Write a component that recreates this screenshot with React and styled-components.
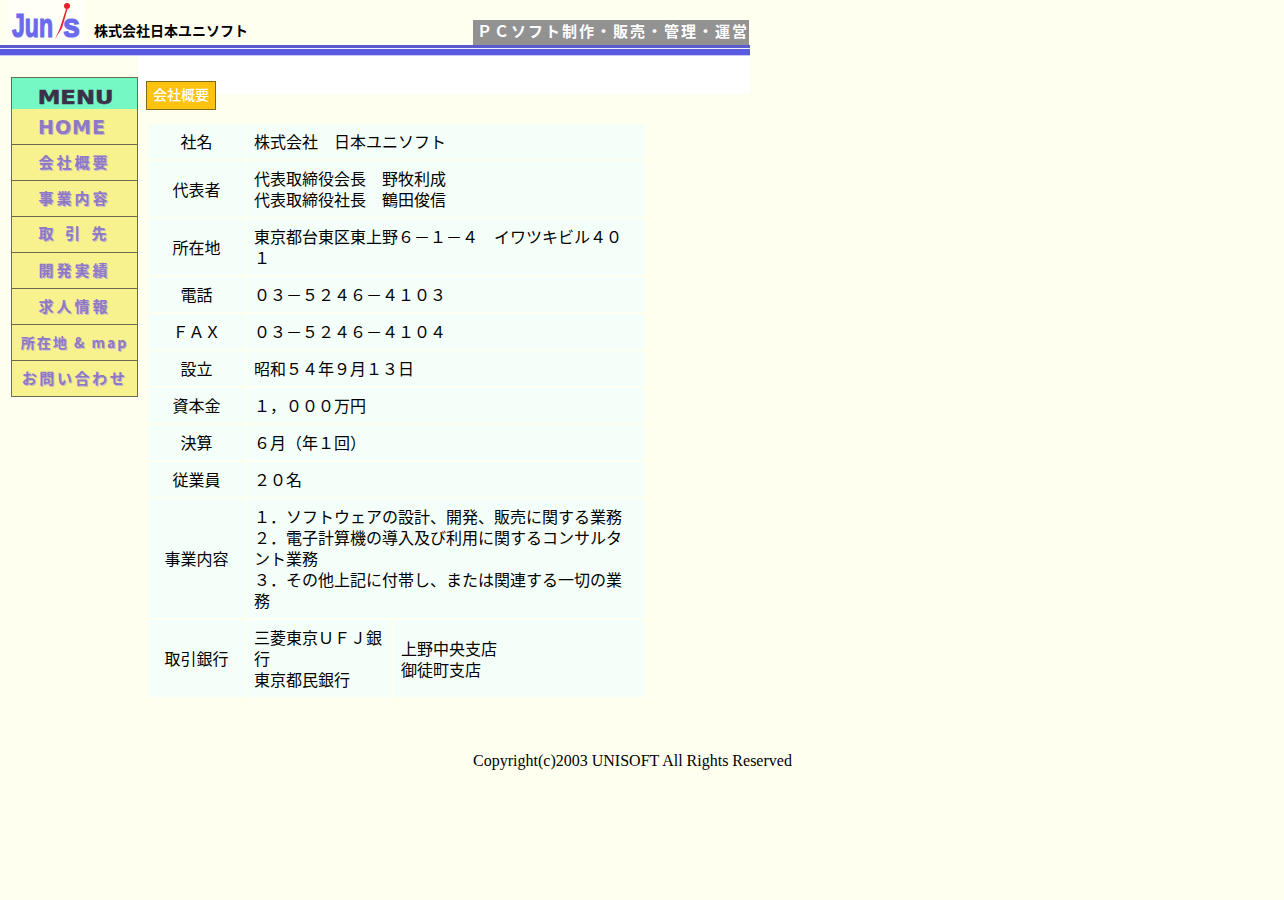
import { Fragment } from "react";
import styled, { createGlobalStyle } from "styled-components";

const GlobalStyle = createGlobalStyle`
  body {
    margin: 0;
    background: #fffff0;
    color: #000;
    font-family: "Liberation Serif", "Noto Sans CJK JP", serif;
  }
`;

const Page = styled.div`
  width: 1284px;
  min-height: 900px;
`;

// ヘッダー
const Header = styled.header`
  width: 750px;
  height: 45px;
  display: flex;
  align-items: flex-end;
  justify-content: space-between;
`;
const Brand = styled.div`
  display: flex;
  align-items: flex-end;
  padding-left: 8px;
`;
const Logo = styled.svg`
  display: block;
  width: 77px;
  height: 45px;
`;
const LogoText = styled.text`
  font-family: "Liberation Sans", sans-serif;
  font-size: 33px;
  font-weight: 700;
  fill: #6a6aec;
  stroke: #6a6aec;
  stroke-width: 1.2px;
`;
const CompanyName = styled.h1`
  margin: 0 0 5px 9px;
  font-family: "Liberation Sans", "Noto Sans CJK JP", sans-serif;
  font-size: 14px;
  line-height: 18px;
  font-weight: 700;
`;
const Tagline = styled.div`
  width: 276px;
  height: 25px;
  margin-right: 1px;
  padding-left: 4px;
  box-sizing: border-box;
  background: #929292;
  color: #fff;
  font-family: "Liberation Sans", "Noto Sans CJK JP", sans-serif;
  font-size: 15px;
  line-height: 23px;
  font-weight: 700;
  letter-spacing: 2px;
  white-space: nowrap;
`;
const Rule = styled.div`
  width: 750px;
  height: 11px;
  background: linear-gradient(#5b5bd0 0 3px, #f4f4ff 3px 4px, #5a5ae0 4px 10px, #c8c8f4 10px);
`;

// 本体
const Body = styled.div`
  display: flex;
  align-items: flex-start;
  padding: 21px 0 0 11px;
`;

const Menu = styled.nav`
  width: 127px;
  flex-shrink: 0;
  box-sizing: border-box;
  border: 1px solid #6b6b50;
`;
const MenuTitle = styled.div`
  height: 31px;
  overflow: hidden;
  padding-left: 3px;
  background: #75f8c4;
  color: #3a3048;
  font-family: "DejaVu Sans", sans-serif;
  font-size: 19px;
  line-height: 38px;
  font-weight: 700;
  text-align: center;
  -webkit-text-stroke: 0.5px #3a3048;
`;
const MenuTitleWide = styled.span`
  display: inline-block;
  transform: scaleX(1.2);
`;
const MenuItem = styled.a`
  display: block;
  height: 36px;
  box-sizing: border-box;
  padding-right: ${(p) => (p.$latin ? 5 : 0)}px;
  background: #f8f28e;
  border-bottom: 1px solid #6b6b50;
  color: #8f78c4;
  font-family: ${(p) => (p.$latin ? '"DejaVu Sans", sans-serif' : '"Noto Sans CJK JP", sans-serif')};
  font-size: ${(p) => p.$size || 15}px;
  font-weight: 700;
  line-height: ${(p) => p.$line || 34}px;
  letter-spacing: ${(p) => p.$spacing || 3}px;
  text-align: center;
  white-space: nowrap;
  overflow: hidden;
  text-shadow: 1px 1px 0 #c4b6c8;
  &:last-child {
    border-bottom: 0;
    height: 35px;
  }
`;

const Main = styled.main`
  width: 604px;
  padding-left: 8px;
  margin-top: -21px;
`;
const TitleBand = styled.div`
  height: 13px;
  margin-left: -8px;
  padding: 25px 0 0 8px;
  background: #fff;
`;
const PageTitle = styled.h2`
  width: 70px;
  height: 29px;
  margin: 0;
  box-sizing: border-box;
  border: 1px solid #7d6a20;
  background: #ffc20e;
  color: #fff;
  font-family: "Liberation Sans", "Noto Sans CJK JP", sans-serif;
  font-size: 14px;
  line-height: 27px;
  font-weight: 500;
  text-align: center;
`;

const InfoTable = styled.table`
  width: 500px;
  margin: 28px 0 0 0;
  border-collapse: separate;
  border-spacing: 2px;
  font-family: "Noto Sans CJK JP", sans-serif;
  font-size: 16px;
  line-height: 21px;
`;
const Label = styled.th`
  width: 97px;
  padding: 7px 0;
  background: #f5fffa;
  font-weight: 400;
  text-align: center;
`;
const Value = styled.td`
  padding: 7px;
  background: #f5fffa;
`;
const BankValue = styled(Value)`
  width: 131px;
`;
const Copyright = styled.p`
  width: 1265px;
  margin: 53px 0 0;
  text-align: center;
  font-size: 16px;
  line-height: 18px;
`;

const MENU = [
  { label: "HOME", $latin: true, $size: 19, $line: 36, $spacing: 1 },
  { label: "会社概要" },
  { label: "事業内容" },
  { label: "取 引 先", $line: 32, $spacing: 4 },
  { label: "開発実績" },
  { label: "求人情報" },
  { label: "所在地 & map", $size: 14, $spacing: 2 },
  { label: "お問い合わせ", $size: 15, $spacing: 2.6 },
];

const ROWS = [
  ["社名", ["株式会社　日本ユニソフト"]],
  ["代表者", ["代表取締役会長　野牧利成", "代表取締役社長　鶴田俊信"]],
  ["所在地", ["東京都台東区東上野６－１－４　イワツキビル４０１"]],
  ["電話", ["０３－５２４６－４１０３"]],
  ["ＦＡＸ", ["０３－５２４６－４１０４"]],
  ["設立", ["昭和５４年９月１３日"]],
  ["資本金", ["１，０００万円"]],
  ["決算", ["６月（年１回）"]],
  ["従業員", ["２０名"]],
  [
    "事業内容",
    [
      "１．ソフトウェアの設計、開発、販売に関する業務",
      "２．電子計算機の導入及び利用に関するコンサルタント業務",
      "３．その他上記に付帯し、または関連する一切の業務",
    ],
  ],
];

const lines = (list) =>
  list.map((text, i) => (
    <Fragment key={text}>
      {i > 0 && <br />}
      {text}
    </Fragment>
  ));

export default function App() {
  return (
    <Page>
      <GlobalStyle />
      <Header>
        <Brand>
          <Logo viewBox="0 0 77 45">
            <rect width="77" height="45" fill="#fffff8" />
            <LogoText x="4" y="37" textLength="41" lengthAdjust="spacingAndGlyphs">
              Jun
            </LogoText>
            <LogoText x="55" y="37" textLength="17" lengthAdjust="spacingAndGlyphs">
              s
            </LogoText>
            <path d="M47 39L52 28 58 9 59.5 9 54 28z" fill="#e8202a" />
            <circle cx="59" cy="6" r="3" fill="#e8202a" />
          </Logo>
          <CompanyName>株式会社日本ユニソフト</CompanyName>
        </Brand>
        <Tagline>ＰＣソフト制作・販売・管理・運営</Tagline>
      </Header>
      <Rule />
      <Body>
        <Menu>
          <MenuTitle>
            <MenuTitleWide>MENU</MenuTitleWide>
          </MenuTitle>
          {MENU.map(({ label, ...rest }) => (
            <MenuItem key={label} {...rest}>
              {label}
            </MenuItem>
          ))}
        </Menu>
        <Main>
          <TitleBand>
            <PageTitle>会社概要</PageTitle>
          </TitleBand>
          <InfoTable>
            <tbody>
              {ROWS.map(([label, value]) => (
                <tr key={label}>
                  <Label>{label}</Label>
                  <Value colSpan={2}>{lines(value)}</Value>
                </tr>
              ))}
              <tr>
                <Label>取引銀行</Label>
                <BankValue>{lines(["三菱東京ＵＦＪ銀行", "東京都民銀行"])}</BankValue>
                <Value>{lines(["上野中央支店", "御徒町支店"])}</Value>
              </tr>
            </tbody>
          </InfoTable>
        </Main>
      </Body>
      <Copyright>Copyright(c)2003 UNISOFT All Rights Reserved</Copyright>
    </Page>
  );
}
